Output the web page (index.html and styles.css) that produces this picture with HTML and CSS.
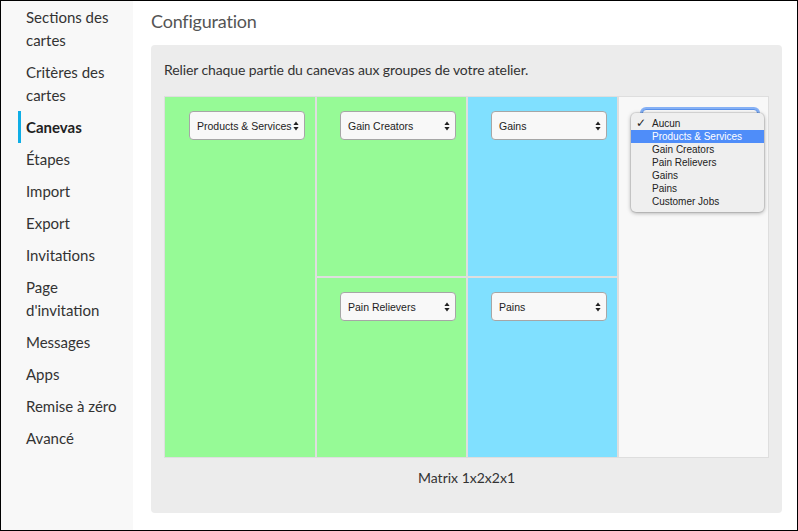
FILE: index.html
```html
<!DOCTYPE html>
<html lang="fr">
<head>
<meta charset="utf-8">
<title>Configuration</title>
<link rel="stylesheet" href="styles.css">
</head>
<body>
<div class="frame">
  <nav class="sidebar">
    <a class="nav-item">Sections des cartes</a>
    <a class="nav-item">Critères des cartes</a>
    <a class="nav-item active">Canevas</a>
    <a class="nav-item">Étapes</a>
    <a class="nav-item">Import</a>
    <a class="nav-item">Export</a>
    <a class="nav-item">Invitations</a>
    <a class="nav-item">Page d'invitation</a>
    <a class="nav-item">Messages</a>
    <a class="nav-item">Apps</a>
    <a class="nav-item">Remise à zéro</a>
    <a class="nav-item">Avancé</a>
  </nav>
  <main class="main">
    <h1 class="title">Configuration</h1>
    <section class="panel">
      <p class="intro">Relier chaque partie du canevas aux groupes de votre atelier.</p>
      <div class="matrix">
        <div class="cell green tall">
          <div class="select"><span>Products &amp; Services</span><svg class="arrows" viewBox="0 0 6 10" width="6" height="10"><path d="M3 0.5 L5.6 4 H0.4 Z M3 9.5 L5.6 6 H0.4 Z" fill="#222"/></svg></div>
        </div>
        <div class="cell green">
          <div class="select"><span>Gain Creators</span><svg class="arrows" viewBox="0 0 6 10" width="6" height="10"><path d="M3 0.5 L5.6 4 H0.4 Z M3 9.5 L5.6 6 H0.4 Z" fill="#222"/></svg></div>
        </div>
        <div class="cell blue">
          <div class="select"><span>Gains</span><svg class="arrows" viewBox="0 0 6 10" width="6" height="10"><path d="M3 0.5 L5.6 4 H0.4 Z M3 9.5 L5.6 6 H0.4 Z" fill="#222"/></svg></div>
        </div>
        <div class="cell empty tall">
          <div class="select focused"></div>
          <ul class="menu">
            <li class="opt checked"><span class="check">✓</span>Aucun</li>
            <li class="opt hl">Products &amp; Services</li>
            <li class="opt">Gain Creators</li>
            <li class="opt">Pain Relievers</li>
            <li class="opt">Gains</li>
            <li class="opt">Pains</li>
            <li class="opt">Customer Jobs</li>
          </ul>
        </div>
        <div class="cell green">
          <div class="select"><span>Pain Relievers</span><svg class="arrows" viewBox="0 0 6 10" width="6" height="10"><path d="M3 0.5 L5.6 4 H0.4 Z M3 9.5 L5.6 6 H0.4 Z" fill="#222"/></svg></div>
        </div>
        <div class="cell blue">
          <div class="select"><span>Pains</span><svg class="arrows" viewBox="0 0 6 10" width="6" height="10"><path d="M3 0.5 L5.6 4 H0.4 Z M3 9.5 L5.6 6 H0.4 Z" fill="#222"/></svg></div>
        </div>
      </div>
      <p class="caption">Matrix 1x2x2x1</p>
    </section>
  </main>
</div>
</body>
</html>
```
FILE: styles.css
```css
* { box-sizing: border-box; }
html, body { margin: 0; padding: 0; }
body {
  font-family: "Lato", "Open Sans", sans-serif;
  color: #333;
  background: #fff;
}
.frame {
  width: 798px;
  height: 531px;
  border: 1px solid #000;
  display: flex;
  overflow: hidden;
}
.sidebar {
  width: 132px;
  flex: none;
  background: #f8f8f8;
  display: flex;
  flex-direction: column;
  padding: 0 8px 0 0;
}
.nav-item {
  display: block;
  font-size: 15px;
  line-height: 23px;
  padding: 5px 0 4px 5px;
  border-left: 3px solid transparent;
  margin-left: 17px;
  color: #333;
}
.nav-item.active {
  border-left-color: #0faee6;
  font-weight: 700;
  color: #222;
}
.main {
  flex: 1;
  padding: 0 16px 0 18px;
  display: flex;
  flex-direction: column;
}
.title {
  margin: 0;
  font-size: 18px;
  font-weight: 400;
  color: #555;
  line-height: 24px;
  padding-top: 8px;
  height: 44px;
  letter-spacing: -0.2px;
}
.panel {
  background: #ececec;
  border-radius: 4px;
  padding: 13px 13px 0 13px;
  height: 468px;
}
.intro {
  margin: 0;
  font-size: 14px;
  line-height: 24px;
  height: 38px;
  letter-spacing: -0.1px;
}
.matrix {
  display: grid;
  grid-template-columns: 150px 149px 149px 149px;
  grid-template-rows: 179px 179px;
  gap: 2px;
  padding: 1px;
  background: #dedede;
  width: 605px;
}
.cell {
  position: relative;
  display: flex;
  justify-content: flex-end;
  align-items: flex-start;
  padding: 14px 10px 0 0;
}
.tall { grid-row: span 2; }
.green { background: #96fa96; }
.blue { background: #80e0ff; }
.empty { background: #f8f8f8; }
.select {
  width: 116px;
  height: 29px;
  background: #f8f8f8;
  border: 1px solid #a6a6a6;
  border-radius: 4px;
  display: flex;
  align-items: center;
  justify-content: space-between;
  padding: 0 5px 0 7px;
  font-family: "Liberation Sans", Arial, sans-serif;
  font-size: 10.5px;
  color: #222;
}
.select.focused {
  margin-top: -2px;
  border-color: #5b93ec;
  box-shadow: 0 0 0 2px #86b1f5;
}
.arrows { flex: none; }
.menu {
  position: absolute;
  left: 12px;
  top: 16px;
  width: 133px;
  margin: 0;
  padding: 4px 0;
  list-style: none;
  background: #efefef;
  border-radius: 5px;
  box-shadow: 0 1px 4px rgba(0,0,0,0.35), 0 0 0 1px rgba(0,0,0,0.08);
  font-family: "Liberation Sans", Arial, sans-serif;
  font-size: 10px;
  color: #222;
}
.opt {
  height: 13px;
  line-height: 13px;
  padding-left: 21px;
  position: relative;
}
.opt.hl {
  background: #4f8df9;
  color: #fff;
}
.check {
  position: absolute;
  left: 5px;
  top: 0;
  width: 12px;
  font-size: 12px;
  font-weight: 700;
  font-family: "DejaVu Sans", sans-serif;
}
.caption {
  margin: 0;
  text-align: center;
  font-size: 14px;
  line-height: 20px;
  padding-top: 10px;
  color: #333;
}
```
